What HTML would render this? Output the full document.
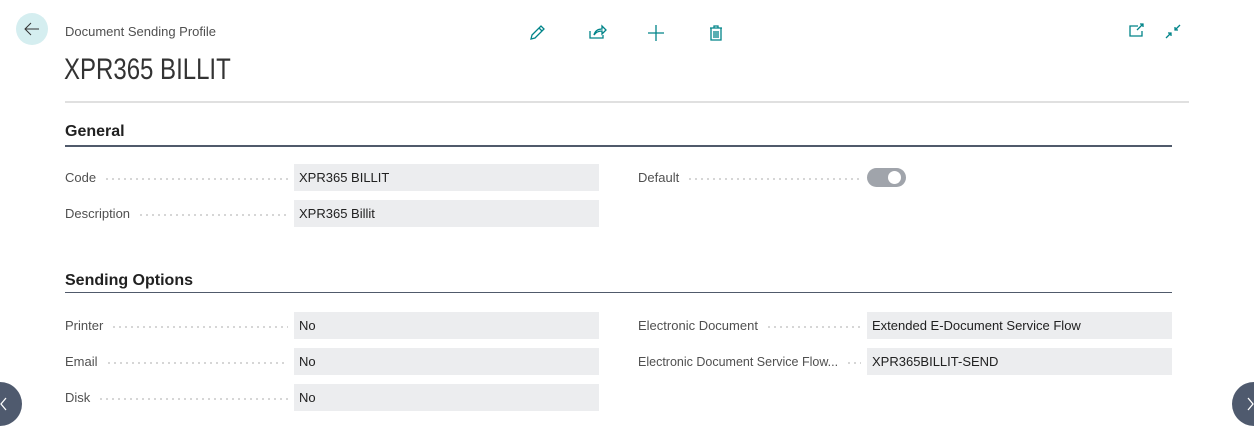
<!DOCTYPE html>
<html><head><style>
body{margin:0;width:1254px;height:438px;background:#fff;font-family:"Liberation Sans","DejaVu Sans",sans-serif;position:relative;overflow:hidden;color:#212121}
.a{position:absolute}
.lbl{position:absolute;font-size:13px;color:#505050;display:flex;align-items:center;height:27px}
.lbl span{white-space:nowrap}
.lbl i{flex:1;height:2px;margin:0 6px 0 8px;position:relative;top:1px;background-image:radial-gradient(circle,#c8c8c8 0.8px,transparent 1px);background-size:6px 2px;background-repeat:repeat-x}
.box{position:absolute;background:#ecedef;height:27px;font-size:13px;line-height:27px;padding-left:5px;box-sizing:border-box;color:#212121}
h2{position:absolute;margin:0;font-size:16px;font-weight:bold;color:#212121}
.ln{position:absolute;left:65px;width:1107px;height:2px;background:#505a6b}
</style></head><body>
<div class="a" style="left:16px;top:13px;width:32px;height:32px;border-radius:50%;background:#d5eef0"></div>
<svg class="a" style="left:22px;top:19px" width="20" height="20" viewBox="0 0 20 20"><path d="M17 10H3M9 4L3 10l6 6" fill="none" stroke="#333" stroke-width="1"/></svg>
<div class="a" style="left:65px;top:24px;font-size:13px;color:#505050">Document Sending Profile</div>
<div class="a" style="left:64px;top:53px;font-size:30px;color:#333;transform:scaleX(0.8);transform-origin:left;-webkit-text-stroke:0px;font-weight:normal">XPR365 BILLIT</div>
<svg class="a" style="left:528px;top:22px" width="200" height="20" viewBox="0 0 200 20" fill="none" stroke="#008489" stroke-width="1.3">
<path d="M3 17l1-4 9-9 3 3-9 9z M11 6l3 3"/>
<path d="M62 9v7h13v-3 M66 13c1-4 4-6 8-6V4l4 4-4 4V9c-3 0-6 1-8 4z"/>
<path d="M128 3v16M120 11h16"/>
<path d="M182 6h12M186 6V4h4v2M183 6v12h10V6M186 9v7M188 9v7M190 9v7"/>
</svg>
<svg class="a" style="left:1128px;top:20px" width="60" height="22" viewBox="0 0 60 22" fill="none" stroke="#008489" stroke-width="1.3">
<path d="M10 6H2v10h12v-5M9 10l6-6M12 4h3v3"/>
<path d="M38 18l5-5M40 13h3v3M52 5l-5 5M47 7v3h3"/>
</svg>
<div class="a" style="left:65px;top:101px;width:1124px;height:2px;background:#e0e0e0"></div>
<h2 style="left:65px;top:123px">General</h2>
<div class="ln" style="top:145px"></div>
<div class="lbl" style="left:65px;top:164px;width:229px"><span>Code</span><i></i></div>
<div class="box" style="left:294px;top:164px;width:305px">XPR365 BILLIT</div>
<div class="lbl" style="left:65px;top:200px;width:229px"><span>Description</span><i></i></div>
<div class="box" style="left:294px;top:200px;width:305px">XPR365 Billit</div>
<div class="lbl" style="left:638px;top:164px;width:229px"><span>Default</span><i></i></div>
<div class="a" style="left:867px;top:168px;width:39px;height:19px;border-radius:10px;background:#a0a4ab"></div>
<div class="a" style="left:888px;top:171px;width:13px;height:13px;border-radius:50%;background:#fff"></div>
<h2 style="left:65px;top:272px">Sending Options</h2>
<div class="ln" style="top:292px;height:1px"></div>
<div class="lbl" style="left:65px;top:312px;width:229px"><span>Printer</span><i></i></div>
<div class="box" style="left:294px;top:312px;width:305px">No</div>
<div class="lbl" style="left:65px;top:348px;width:229px"><span>Email</span><i></i></div>
<div class="box" style="left:294px;top:348px;width:305px">No</div>
<div class="lbl" style="left:65px;top:384px;width:229px"><span>Disk</span><i></i></div>
<div class="box" style="left:294px;top:384px;width:305px">No</div>
<div class="lbl" style="left:638px;top:312px;width:229px"><span>Electronic Document</span><i></i></div>
<div class="box" style="left:867px;top:312px;width:305px">Extended E-Document Service Flow</div>
<div class="lbl" style="left:638px;top:348px;width:229px"><span style="font-size:12.5px">Electronic Document Service Flow...</span><i></i></div>
<div class="box" style="left:867px;top:348px;width:305px">XPR365BILLIT-SEND</div>
<div class="a" style="left:-22px;top:382px;width:44px;height:44px;border-radius:50%;background:#4f5a6e"></div>
<svg class="a" style="left:0;top:396px" width="8" height="16"><path d="M6 2L1 8l5 6" fill="none" stroke="#fff" stroke-width="1.3"/></svg>
<div class="a" style="left:1232px;top:382px;width:44px;height:44px;border-radius:50%;background:#4f5a6e"></div>
<svg class="a" style="left:1246px;top:396px" width="8" height="16"><path d="M2 2l5 6-5 6" fill="none" stroke="#fff" stroke-width="1.3"/></svg>
</body></html>
